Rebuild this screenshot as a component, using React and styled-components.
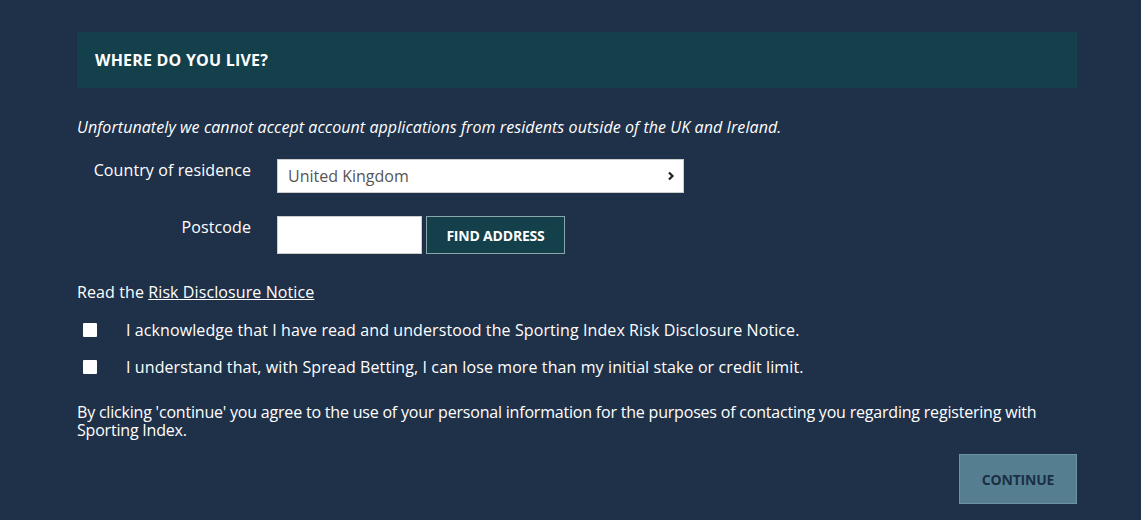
import React from 'react';
import styled, { createGlobalStyle } from 'styled-components';

const GlobalStyle = createGlobalStyle`
    html, body {
        margin:0;
        background:#1f3149;
        font-family:"Open Sans", "Liberation Sans", sans-serif;
        color:#fff;
    }
`

const App = () => {
    return (
        <>
            <GlobalStyle />
            <Page>
                <Header>WHERE DO YOU LIVE?</Header>
                <Intro>Unfortunately we cannot accept account applications from residents outside of the UK and Ireland.</Intro>
                <FormGrid>
                    <FieldLabel>Country of residence</FieldLabel>
                    <Select>
                        <span>United Kingdom</span>
                        <svg width="10" height="10" viewBox="0 0 10 10">
                            <path d="M3 1.5 L6.5 5 L3 8.5" fill="none" stroke="#222" strokeWidth="2.2" />
                        </svg>
                    </Select>
                    <FieldLabel>Postcode</FieldLabel>
                    <PostcodeRow>
                        <PostcodeInput type="text" />
                        <FindBtn>FIND ADDRESS</FindBtn>
                    </PostcodeRow>
                </FormGrid>
                <ReadLine>
                    Read the <NoticeLink href="#">Risk Disclosure Notice</NoticeLink>
                </ReadLine>
                <CheckList>
                    <CheckRow>
                        <Box type="checkbox" />
                        <span>I acknowledge that I have read and understood the Sporting Index Risk Disclosure Notice.</span>
                    </CheckRow>
                    <CheckRow>
                        <Box type="checkbox" />
                        <span>I understand that, with Spread Betting, I can lose more than my initial stake or credit limit.</span>
                    </CheckRow>
                </CheckList>
                <Consent>
                    By clicking 'continue' you agree to the use of your personal information for the purposes of contacting you regarding registering with Sporting Index.
                </Consent>
                <Footer>
                    <ContinueBtn>CONTINUE</ContinueBtn>
                </Footer>
            </Page>
        </>
    );
};

const Page = styled.div`
    width:1000px;
    margin:0 0 0 77px;
    padding-top:32px;
`

const Header = styled.div`
    background:#14404c;
    height:56px;
    display:flex;
    align-items:center;
    padding-left:18px;
    font-weight:700;
    font-size:16px;
    letter-spacing:0.2px;
`

const Intro = styled.p`
    margin:27px 0 0;
    font-style:italic;
    font-size:16px;
    letter-spacing:0.08px;
    line-height:24px;
`

const FormGrid = styled.div`
    display:grid;
    grid-template-columns:174px auto;
    column-gap:26px;
    row-gap:23px;
    margin-top:20px;
    justify-items:start;
`

const FieldLabel = styled.label`
    justify-self:end;
    font-size:16px;
    line-height:22px;
    letter-spacing:0.1px;
`

const Select = styled.div`
    width:407px;
    height:34px;
    box-sizing:border-box;
    background:#fff;
    border:1px solid #ccc;
    display:flex;
    align-items:center;
    justify-content:space-between;
    padding:0 7px 0 10px;
    color:#555;
    font-size:16px;
`

const PostcodeRow = styled.div`
    display:flex;
    gap:4px;
`

const PostcodeInput = styled.input`
    width:145px;
    height:38px;
    box-sizing:border-box;
    border:1px solid #ccc;
    background:#fff;
    margin:0;
`

const FindBtn = styled.button`
    width:139px;
    height:38px;
    background:#14404c;
    border:1px solid #8aa6ab;
    color:#fff;
    font-family:"Open Sans", sans-serif;
    font-weight:700;
    font-size:14px;
    letter-spacing:-0.2px;
`

const ReadLine = styled.div`
    margin-top:27px;
    font-size:16px;
    line-height:22px;
    letter-spacing:0.1px;
`

const NoticeLink = styled.a`
    color:#fff;
    text-decoration:underline;
`

const CheckList = styled.div`
    margin-top:16px;
    display:flex;
    flex-direction:column;
    gap:15px;
`

const CheckRow = styled.label`
    display:flex;
    align-items:center;
    font-size:16px;
    line-height:22px;
    letter-spacing:0.1px;
`

const Box = styled.input`
    appearance:none;
    width:14px;
    height:14px;
    background:#fff;
    border-radius:1px;
    margin:0 29px 0 6px;
`

const Consent = styled.p`
    margin:25px 0 0;
    font-size:16px;
    line-height:18px;
    letter-spacing:-0.2px;
`

const Footer = styled.div`
    display:flex;
    justify-content:flex-end;
    margin-top:15px;
`

const ContinueBtn = styled.button`
    width:118px;
    height:50px;
    background:#557f91;
    border:1px solid #7093a4;
    color:#1b2f44;
    font-family:"Open Sans", sans-serif;
    font-weight:700;
    font-size:14px;
    letter-spacing:-0.2px;
`

export default App;
